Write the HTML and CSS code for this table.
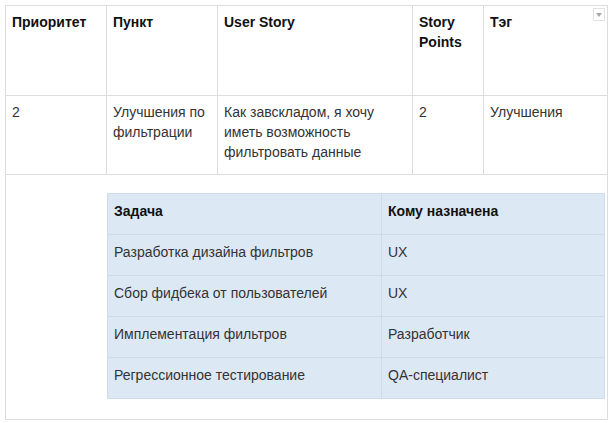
FILE: index.html
```html
<!DOCTYPE html>
<html lang="ru">
<head>
<meta charset="utf-8">
<link rel="stylesheet" href="styles.css">
</head>
<body>
<div class="wrap">
  <table class="main">
    <colgroup>
      <col class="c1"><col class="c2"><col class="c3"><col class="c4"><col class="c5">
    </colgroup>
    <tr class="head">
      <th>Приоритет</th>
      <th>Пункт</th>
      <th>User Story</th>
      <th>Story Points</th>
      <th class="last">Тэг<span class="menu"><svg width="6" height="4" viewBox="0 0 6 4"><path d="M0 0H6L3 4Z" fill="#a8a8a8"/></svg></span></th>
    </tr>
    <tr class="row">
      <td>2</td>
      <td>Улучшения по фильтрации</td>
      <td>Как завскладом, я хочу иметь возможность фильтровать данные</td>
      <td>2</td>
      <td>Улучшения</td>
    </tr>
    <tr class="nested">
      <td colspan="5">
        <table class="tasks">
          <colgroup><col class="t1"><col class="t2"></colgroup>
          <tr><th>Задача</th><th>Кому назначена</th></tr>
          <tr><td>Разработка дизайна фильтров</td><td>UX</td></tr>
          <tr><td>Сбор фидбека от пользователей</td><td>UX</td></tr>
          <tr><td>Имплементация фильтров</td><td>Разработчик</td></tr>
          <tr><td>Регрессионное тестирование</td><td>QA-специалист</td></tr>
        </table>
      </td>
    </tr>
  </table>
</div>
</body>
</html>
```

FILE: styles.css
```css
html, body {
  margin: 0;
  padding: 0;
  background: #ffffff;
}
body {
  font-family: "Liberation Sans", Arial, sans-serif;
  font-size: 14px;
  line-height: 20px;
  color: #333333;
}
.wrap {
  padding: 5px;
}
table {
  border-collapse: collapse;
  table-layout: fixed;
}
.main {
  width: 602px;
}
.main > colgroup > .c1 { width: 101px; }
.main > colgroup > .c2 { width: 111px; }
.main > colgroup > .c3 { width: 195px; }
.main > colgroup > .c4 { width: 71px; }
.main > colgroup > .c5 { width: 124px; }

.main > tbody > tr > th,
.main > tbody > tr > td {
  border: 1px solid #dddddd;
  padding: 6px 6px;
  vertical-align: top;
  text-align: left;
}
.main th {
  font-weight: bold;
  color: #111111;
}
.head { height: 90px; }
.row { height: 79px; }
.last { position: relative; }
.menu {
  position: absolute;
  right: 2px;
  top: 2px;
  width: 10px;
  height: 11px;
  border: 1px solid #e2e2e2;
  background: #fff;
  display: flex;
  align-items: center;
  justify-content: center;
}
.main > tbody > tr.nested > td {
  padding: 18px 2px 20px 101px;
}
.tasks {
  width: 497px;
  background: #dde8f5;
}
.tasks .t1 { width: 274px; }
.tasks .t2 { width: 223px; }
.tasks th,
.tasks td {
  border: 1px solid #d0dbe8;
  padding: 7px 6px;
  height: 41px;
  box-sizing: border-box;
  vertical-align: top;
  text-align: left;
}
.tasks th {
  font-weight: bold;
  color: #111111;
}
```
